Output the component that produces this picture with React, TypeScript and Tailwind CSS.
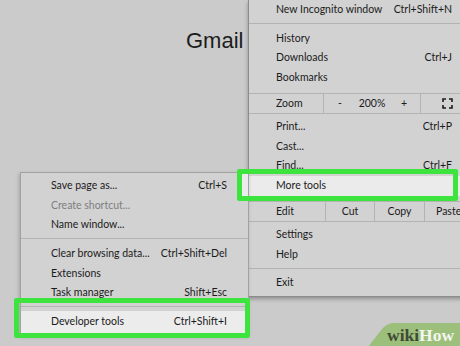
import React from "react";

const ui = "font-['Lato',sans-serif]";

function Row({
  label,
  keys,
  className = "",
}: {
  label: string;
  keys?: string;
  className?: string;
}) {
  return (
    <div className={"flex items-center justify-between whitespace-nowrap " + className}>
      <span>{label}</span>
      {keys && <span>{keys}</span>}
    </div>
  );
}

function Sep({ className = "" }: { className?: string }) {
  return (
    <div className={className}>
      <div className="h-px bg-[#b3b3b3]" />
    </div>
  );
}

function FullscreenIcon() {
  return (
    <svg width="11" height="11" viewBox="0 0 11 11" fill="none" stroke="#1b1b1b" strokeWidth="1.6">
      <path d="M1 4V1h3M7 1h3v3M10 7v3H7M4 10H1V7" />
    </svg>
  );
}

export default function App() {
  return (
    <div className="relative h-[346px] w-[460px] overflow-hidden bg-[#cbcbcb]">
      {/* page behind the menus */}
      <h1 className="pl-[186px] pt-[30px] font-['Liberation_Sans',Arial,sans-serif] text-[22px] leading-none text-[#1c1c1c]">
        Gmail
      </h1>

      {/* main chrome menu */}
      <div
        className={
          "absolute left-[248px] top-0 w-[232px] border-b border-l border-[#8c8c8c] bg-[#d2d2d2] pb-[3px] text-[10.5px] text-[#1b1b1b] shadow-[0_2px_4px_rgba(0,0,0,0.3)] " +
          ui
        }
      >
        <Row label="New Incognito window" keys="Ctrl+Shift+N" className="h-[20px] pl-[27px] pr-[28px]" />
        <Sep className="h-[9px] pt-[3px]" />
        <Row label="History" className="h-[19.5px] pl-[27px] pr-[28px]" />
        <Row label="Downloads" keys="Ctrl+J" className="h-[19.5px] pl-[27px] pr-[28px]" />
        <Row label="Bookmarks" className="h-[19.5px] pl-[27px] pr-[28px]" />
        <div className="h-[5.5px]" />
        <div className="flex h-[21px] items-center border-y border-[#b3b3b3]">
          <div className="flex h-full w-[75px] items-center border-r border-[#b3b3b3] pl-[27px]">Zoom</div>
          <div className="grid h-full w-[97px] grid-cols-3 items-center border-r border-[#b3b3b3] text-center">
            <span>-</span>
            <span>200%</span>
            <span>+</span>
          </div>
          <div className="flex h-full w-[52px] items-center justify-center">
            <FullscreenIcon />
          </div>
        </div>
        <div className="h-[3.5px]" />
        <Row label="Print..." keys="Ctrl+P" className="h-[19.5px] pl-[27px] pr-[28px]" />
        <Row label="Cast..." className="h-[19.5px] pl-[27px] pr-[28px]" />
        <Row label="Find..." keys="Ctrl+F" className="h-[19.5px] pl-[27px] pr-[28px]" />
        <Row label="More tools" className="h-[19.5px] bg-[#ebebeb] pl-[27px] pr-[28px]" />
        <div className="h-[5.5px]" />
        <div className="flex h-[21px] items-center border-y border-[#b3b3b3]">
          <div className="flex h-full w-[77px] items-center border-r border-[#b3b3b3] pl-[27px]">Edit</div>
          <div className="flex h-full w-[49px] items-center justify-center border-r border-[#b3b3b3]">Cut</div>
          <div className="flex h-full w-[50px] items-center justify-center border-r border-[#b3b3b3]">Copy</div>
          <div className="flex h-full w-[50px] items-center pl-[11px]">Paste</div>
        </div>
        <div className="h-[3.5px]" />
        <Row label="Settings" className="h-[19.5px] pl-[27px] pr-[28px]" />
        <Row label="Help" className="h-[19.5px] pl-[27px] pr-[28px]" />
        <Sep className="h-[9px] pt-[3px]" />
        <Row label="Exit" className="h-[19.5px] pl-[27px] pr-[28px]" />
      </div>

      {/* more tools submenu */}
      <div
        className={
          "absolute left-[20px] top-[172px] w-[229px] border-x border-t border-[#a2a2a2] bg-[#d2d2d2] pb-[2px] pt-[3.5px] text-[10.5px] text-[#1b1b1b] shadow-[-1px_2px_4px_rgba(0,0,0,0.2)] " +
          ui
        }
      >
        <Row label="Save page as..." keys="Ctrl+S" className="h-[19.5px] pl-[30px] pr-[21px]" />
        <Row label="Create shortcut..." className="h-[19.5px] pl-[30px] pr-[21px] text-[#7e7e7e]" />
        <Row label="Name window..." className="h-[19.5px] pl-[30px] pr-[21px]" />
        <Sep className="h-[9.5px] pt-[3px]" />
        <Row label="Clear browsing data..." keys="Ctrl+Shift+Del" className="h-[19.5px] pl-[30px] pr-[21px]" />
        <Row label="Extensions" className="h-[19.5px] pl-[30px] pr-[21px]" />
        <Row label="Task manager" keys="Shift+Esc" className="h-[19.5px] pl-[30px] pr-[21px]" />
        <Sep className="h-[8px] pt-[3px]" />
        <Row label="Developer tools" keys="Ctrl+Shift+I" className="h-[22px] bg-[#ececec] pl-[30px] pr-[21px]" />
      </div>

      {/* green highlight boxes */}
      <div className="absolute left-[237px] top-[169px] h-[32px] w-[221px] rounded-[2px] border-[5px] border-[#3ee43e] shadow-[inset_6px_0_0_#ececec]" />
      <div className="absolute left-[14px] top-[298px] h-[40px] w-[236px] rounded-[2px] border-[5px] border-[#3ee43e]" />

      {/* watermark */}
      <div className="absolute left-[375px] top-[323px] h-[30px] w-[110px] -skew-x-[38deg] rounded-tl-[6px] bg-[#9dbf7c]" />
      <div className="absolute left-[387px] top-[325px] font-['Liberation_Serif',serif] text-[17.5px] font-bold leading-[20px]">
        <span className="text-[#3f4b36]">wiki</span>
        <span className="text-[#f3f6ee]">How</span>
      </div>
    </div>
  );
}
